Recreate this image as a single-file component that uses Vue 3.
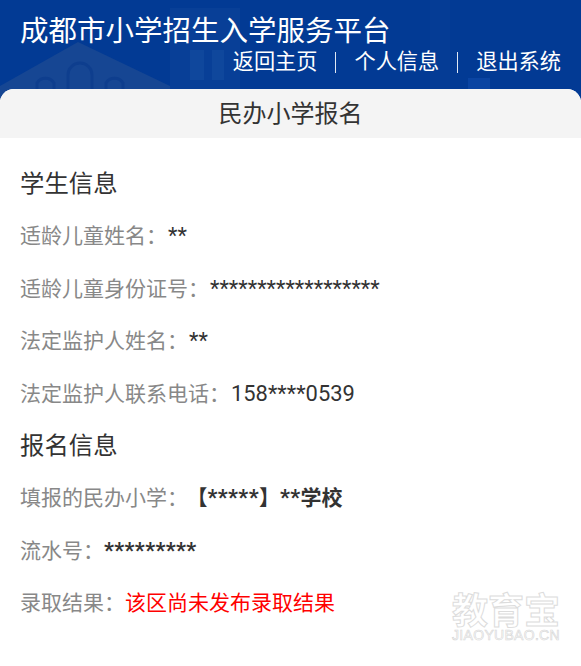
<script setup>
const studentRows = [
  { label: '适龄儿童姓名：', value: '**' },
  { label: '适龄儿童身份证号：', value: '******************' },
  { label: '法定监护人姓名：', value: '**' },
  { label: '法定监护人联系电话：', value: '158****0539' },
]
const navLinks = ['返回主页', '个人信息', '退出系统']
</script>

<template>
  <div class="page">
    <header class="header">
      <svg class="header-art" viewBox="0 0 581 100" aria-hidden="true">
        <path d="M0 86 L78 42 L170 86 V100 H0 Z" fill="#164693" />
        <path d="M37 89 v-6 a10 10 0 0 1 17 0 v6 M68 89 v-14 a12 12 0 0 1 24 0 v14 M106 89 v-6 a10 10 0 0 1 17 0 v6" fill="none" stroke="#0e3e8e" stroke-width="3" />
        <rect x="170" y="8" width="70" height="85" fill="#083f97" />
        <rect x="190" y="50" width="14" height="30" fill="#0f479c" />
        <rect x="212" y="50" width="12" height="30" fill="#0f479c" />
        <rect x="430" y="0" width="20" height="90" fill="#053c95" />
        <rect x="468" y="78" width="22" height="12" fill="#0a44a2" />
      </svg>
      <h1 class="title">成都市小学招生入学服务平台</h1>
      <nav class="nav">
        <template v-for="(link, i) in navLinks" :key="link">
          <span v-if="i" class="sep"></span>
          <span class="nav-link">{{ link }}</span>
        </template>
      </nav>
    </header>

    <main class="card">
      <div class="card-title">民办小学报名</div>
      <section class="content">
        <h2 class="section-title">学生信息</h2>
        <p v-for="row in studentRows" :key="row.label" class="row">
          <span class="label">{{ row.label }}</span><span class="value plain">{{ row.value }}</span>
        </p>
        <h2 class="section-title second">报名信息</h2>
        <p class="row">
          <span class="label">填报的民办小学：</span><strong class="value school"><span class="cjk">【</span>*****<span class="cjk">】</span>**<span class="cjk">学校</span></strong>
        </p>
        <p class="row">
          <span class="label">流水号：</span><strong class="value">*********</strong>
        </p>
        <p class="row">
          <span class="label">录取结果：</span><span class="result">该区尚未发布录取结果</span>
        </p>
      </section>
      <div class="watermark">
        <span class="wm-cn">教育宝</span>
        <span class="wm-en">JIAOYUBAO.CN</span>
      </div>
    </main>
  </div>
</template>

<style>
html, body { margin: 0; background: #fff; }
</style>

<style scoped>
.page {
  position: relative;
  width: 581px;
  height: 666px;
  overflow: hidden;
  background: #fff;
  font-family: "Liberation Sans", "Noto Sans CJK SC", sans-serif;
}
.header {
  position: relative;
  height: 100px;
  background: #023a94;
  color: #fff;
  box-sizing: border-box;
  padding: 13px 20px 0;
}
.header-art {
  position: absolute;
  inset: 0;
  width: 581px;
  height: 100px;
}
.title {
  position: relative;
  margin: 0;
  font-size: 28.5px;
  line-height: 36px;
  font-weight: 400;
}
.nav {
  position: relative;
  display: flex;
  justify-content: flex-end;
  align-items: center;
  height: 26px;
}
.nav-link {
  font-size: 21.2px;
  line-height: 26px;
}
.sep {
  width: 1px;
  height: 21px;
  margin: 0 18px;
  background: #dfe7f3;
}
.card {
  position: relative;
  margin-top: -11px;
  height: 577px;
  border-radius: 14px 14px 0 0;
  background: #fff;
  overflow: hidden;
}
.card-title {
  height: 49px;
  line-height: 50px;
  text-align: center;
  background: #f4f4f4;
  color: #333;
  font-size: 24px;
}
.content {
  padding: 28px 20px 0;
}
.section-title {
  margin: 0;
  font-size: 24.4px;
  line-height: 36px;
  font-weight: 400;
  color: #333;
}
.second {
  margin-top: 8px;
}
.row {
  margin: 0;
  height: 52.5px;
  line-height: 52.5px;
  font-size: 21px;
  white-space: nowrap;
}
.section-title + .row { margin-top: 8px; }
.label { color: #888; }
.value {
  color: #333;
  font-family: Roboto, "Noto Sans CJK SC", sans-serif;
  font-size: 21.9px;
}
.plain { margin-left: 1px; }
strong.value { letter-spacing: 0.35px; }
.school { margin-left: 9px; }
.cjk {
  font-size: 21px;
  letter-spacing: 0;
}
.result { color: #f00; }
.watermark {
  position: absolute;
  right: 21px;
  bottom: 24px;
  display: flex;
  flex-direction: column;
  align-items: center;
  color: #fff;
  -webkit-text-stroke: 1px #dcdcdc;
}
.wm-cn {
  font-size: 36px;
  line-height: 32px;
  font-weight: 700;
}
.wm-en {
  margin-top: 1px;
  font-size: 14px;
  line-height: 13px;
  letter-spacing: 0.3px;
  -webkit-text-stroke: 0.6px #d6d6d6;
}
</style>
